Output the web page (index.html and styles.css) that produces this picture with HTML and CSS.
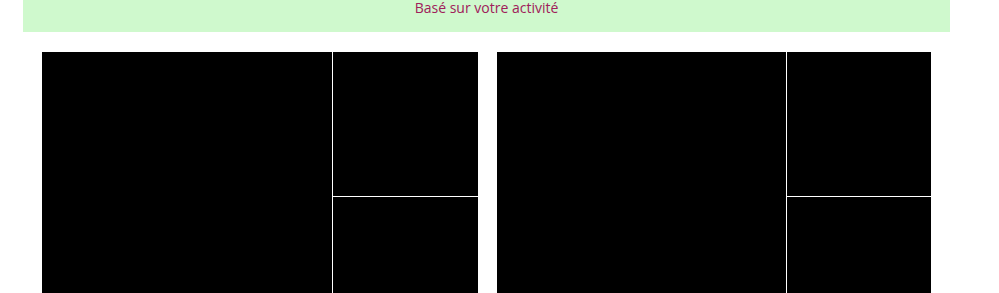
FILE: index.html
```html
<!DOCTYPE html>
<html lang="fr">
<head>
    <meta charset="UTF-8">
    <meta name="viewport" content="width=device-width, initial-scale=1.0">
    <title>Suggestions</title>
    <link rel="stylesheet" href="styles.css">
</head>
<body>
    <div class="banner">
        <p class="banner-text">Basé sur votre activité</p>
    </div>

    <div class="feed">
        <div class="mosaic">
            <div class="tile tile-main"></div>
            <div class="tile"></div>
            <div class="tile"></div>
        </div>
        <div class="mosaic">
            <div class="tile tile-main"></div>
            <div class="tile"></div>
            <div class="tile"></div>
        </div>
    </div>
</body>
</html>
```

FILE: styles.css
```css
body {
    font-family: 'Open Sans', 'Segoe UI', sans-serif;
    background: #ffffff;
    margin: 0;
}

.banner {
    background: #cff9cd;
    width: 927px;
    height: 32px;
    margin-left: 23px;
}

.banner-text {
    margin: 0;
    padding-top: 1px;
    text-align: center;
    color: #a0205a;
    font-size: 14px;
    line-height: 14px;
}

.feed {
    display: grid;
    grid-template-columns: 436px 434px;
    gap: 19px;
    padding: 20px 0 0 42px;
}

.mosaic {
    display: grid;
    grid-template-columns: 2fr 1fr;
    grid-template-rows: 144px 144px;
    gap: 1px;
    background: #ffffff;
}

.tile {
    background: #000000;
}

.tile-main {
    grid-row: span 2;
}
```
